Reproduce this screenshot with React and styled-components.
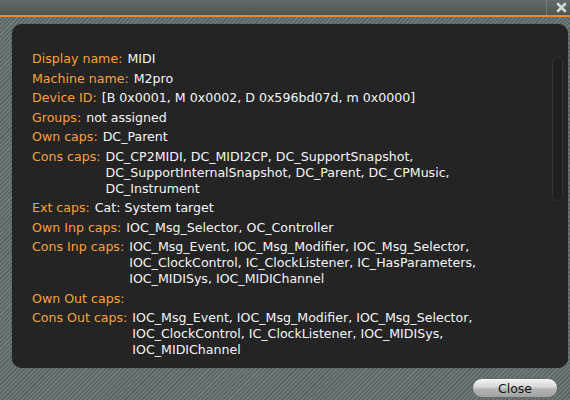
import React from 'react';
import styled, { createGlobalStyle } from 'styled-components';

const Global = createGlobalStyle`
  html, body {
    margin: 0;
    height: 100%;
  }
  body {
    width: 570px;
    height: 400px;
    overflow: hidden;
    background: repeating-linear-gradient(
      135deg,
      #6f7b7b 0px,
      #6f7b7b 1.5px,
      #5a6565 1.5px,
      #5a6565 3px
    );
    font-family: "DejaVu Sans", "Liberation Sans", sans-serif;
  }
`;

const rows = [
  { label: 'Display name:', lines: ['MIDI'] },
  { label: 'Machine name:', lines: ['M2pro'] },
  { label: 'Device ID:', lines: ['[B 0x0001, M 0x0002, D 0x596bd07d, m 0x0000]'] },
  { label: 'Groups:', lines: ['not assigned'] },
  { label: 'Own caps:', lines: ['DC_Parent'] },
  {
    label: 'Cons caps:',
    lines: [
      'DC_CP2MIDI, DC_MIDI2CP, DC_SupportSnapshot,',
      'DC_SupportInternalSnapshot, DC_Parent, DC_CPMusic,',
      'DC_Instrument',
    ],
  },
  { label: 'Ext caps:', lines: ['Cat: System target'] },
  { label: 'Own Inp caps:', lines: ['IOC_Msg_Selector, OC_Controller'] },
  {
    label: 'Cons Inp caps:',
    lines: [
      'IOC_Msg_Event, IOC_Msg_Modifier, IOC_Msg_Selector,',
      'IOC_ClockControl, IC_ClockListener, IC_HasParameters,',
      'IOC_MIDISys, IOC_MIDIChannel',
    ],
  },
  { label: 'Own Out caps:', lines: [] },
  {
    label: 'Cons Out caps:',
    lines: [
      'IOC_Msg_Event, IOC_Msg_Modifier, IOC_Msg_Selector,',
      'IOC_ClockControl, IC_ClockListener, IOC_MIDISys,',
      'IOC_MIDIChannel',
    ],
  },
];

const Page = styled.div`
  display: flex;
  flex-direction: column;
  height: 400px;
`;

const TitleBar = styled.div`
  height: 15px;
  flex-shrink: 0;
  background: linear-gradient(#626a6a, #4e5555);
  border-bottom: 2px solid #f0892a;
  display: flex;
  justify-content: flex-end;
  align-items: stretch;
`;

const CloseCorner = styled.div`
  width: 24px;
  border-left: 1px dotted #8d9595;
  display: flex;
  align-items: center;
  justify-content: flex-end;
  padding-right: 3px;
  box-sizing: border-box;
`;

const Panel = styled.div`
  margin: 7px 2px 0 12px;
  height: 344px;
  background: #242424;
  border-radius: 10px;
  position: relative;
  padding: 27px 0 0 20px;
  box-sizing: border-box;
  box-shadow: 0 0 1px rgba(0, 0, 0, 0.6);
`;

const List = styled.div`
  display: flex;
  flex-direction: column;
  gap: 3.5px;
`;

const Row = styled.div`
  display: flex;
  font-size: 12.6px;
  line-height: 16px;
`;

const Label = styled.span`
  color: #f5a23c;
  white-space: nowrap;
  margin-right: 5px;
`;

const Value = styled.div`
  color: #f5f5f5;
  display: flex;
  flex-direction: column;
  white-space: nowrap;
`;

const ScrollTrack = styled.div`
  position: absolute;
  top: 33px;
  right: 5px;
  width: 9px;
  height: 142px;
  border: 1px solid #343434;
  border-radius: 6px;
  background: #1f1f1f;
`;

const Footer = styled.div`
  display: flex;
  justify-content: flex-end;
  padding: 10px 12px 0 0;
`;

const CloseButton = styled.button`
  width: 86px;
  height: 20px;
  border-radius: 10px;
  border: 1px solid #6a6a6a;
  background: linear-gradient(#f4f4f4 0%, #d6d6d6 45%, #b4b4b4 55%, #a2a2a2 100%);
  font-family: "DejaVu Sans", "Liberation Sans", sans-serif;
  font-size: 12.5px;
  color: #111;
  padding: 0;
  box-shadow: inset 0 1px 0 rgba(255, 255, 255, 0.8);
`;

function CrossIcon() {
  return (
    <svg width="11" height="11" viewBox="0 0 11 11">
      <path d="M2 2 L9 9 M9 2 L2 9" stroke="#d4d8d8" strokeWidth="2.6" strokeLinecap="round" />
    </svg>
  );
}

export default function App() {
  return (
    <Page>
      <Global />
      <TitleBar>
        <CloseCorner>
          <CrossIcon />
        </CloseCorner>
      </TitleBar>
      <Panel>
        <List>
          {rows.map((r) => (
            <Row key={r.label}>
              <Label>{r.label}</Label>
              <Value>
                {r.lines.map((l) => (
                  <span key={l}>{l}</span>
                ))}
              </Value>
            </Row>
          ))}
        </List>
        <ScrollTrack />
      </Panel>
      <Footer>
        <CloseButton>Close</CloseButton>
      </Footer>
    </Page>
  );
}
